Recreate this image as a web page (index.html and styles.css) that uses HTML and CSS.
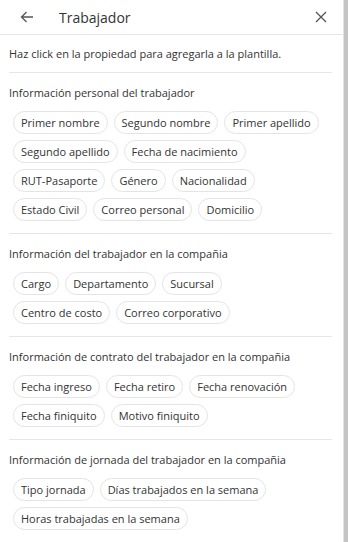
FILE: index.html
```html
<!DOCTYPE html>
<html lang="es">
<head>
    <meta charset="UTF-8">
    <meta name="viewport" content="width=device-width, initial-scale=1.0">
    <title>Trabajador</title>
    <link rel="stylesheet" href="styles.css">
</head>
<body>
<div class="frame">
    <div class="panel">
        <div class="header">
            <button class="icon-btn back" aria-label="Volver">
                <svg width="14" height="12" viewBox="0 0 14 12"><path d="M13 6H1.5M6.5 1L1.5 6l5 5" fill="none" stroke="#555" stroke-width="1.3"/></svg>
            </button>
            <span class="title">Trabajador</span>
            <button class="icon-btn close" aria-label="Cerrar">
                <svg width="12" height="12" viewBox="0 0 12 12"><path d="M1 1l10 10M11 1L1 11" fill="none" stroke="#555" stroke-width="1.3"/></svg>
            </button>
        </div>

        <div class="content">
            <p class="intro">Haz click en la propiedad para agregarla a la plantilla.</p>

            <div class="section">
                <h3>Información personal del trabajador</h3>
                <div class="chips">
                    <span class="chip">Primer nombre</span>
                    <span class="chip">Segundo nombre</span>
                    <span class="chip">Primer apellido</span>
                    <span class="chip">Segundo apellido</span>
                    <span class="chip">Fecha de nacimiento</span>
                    <span class="chip">RUT-Pasaporte</span>
                    <span class="chip">Género</span>
                    <span class="chip">Nacionalidad</span>
                    <span class="chip">Estado Civil</span>
                    <span class="chip">Correo personal</span>
                    <span class="chip">Domicilio</span>
                </div>
            </div>

            <div class="section">
                <h3>Información del trabajador en la compañia</h3>
                <div class="chips">
                    <span class="chip">Cargo</span>
                    <span class="chip">Departamento</span>
                    <span class="chip">Sucursal</span>
                    <span class="chip">Centro de costo</span>
                    <span class="chip">Correo corporativo</span>
                </div>
            </div>

            <div class="section">
                <h3>Información de contrato del trabajador en la compañia</h3>
                <div class="chips">
                    <span class="chip">Fecha ingreso</span>
                    <span class="chip">Fecha retiro</span>
                    <span class="chip">Fecha renovación</span>
                    <span class="chip">Fecha finiquito</span>
                    <span class="chip">Motivo finiquito</span>
                </div>
            </div>

            <div class="section">
                <h3>Información de jornada del trabajador en la compañia</h3>
                <div class="chips">
                    <span class="chip">Tipo jornada</span>
                    <span class="chip">Días trabajados en la semana</span>
                    <span class="chip">Horas trabajadas en la semana</span>
                </div>
            </div>
        </div>
    </div>
    <div class="scrollbar"></div>
</div>
</body>
</html>
```

FILE: styles.css
```css
body {
    margin: 0;
    font-family: 'Open Sans', 'Liberation Sans', sans-serif;
    color: #333;
    background-color: #fff;
}

.frame {
    display: flex;
    height: 542px;
    overflow: hidden;
}

.panel {
    flex: 1;
}

.scrollbar {
    width: 4px;
    background-color: #c4c4c4;
    border-left: 1px solid #e2e2e2;
}

.header {
    display: flex;
    align-items: center;
    height: 34px;
    padding: 0 14px 0 18px;
    border-bottom: 1px solid #e6e6e6;
}

.icon-btn {
    display: flex;
    align-items: center;
    background: none;
    border: none;
    padding: 2px;
    cursor: pointer;
}

.title {
    flex: 1;
    margin-left: 23px;
    font-size: 14px;
    color: #333;
}

.content {
    padding: 0 11px 0 9px;
}

.intro {
    margin: 0;
    padding: 11px 0 11px;
    font-size: 11px;
    line-height: 15px;
    color: #333;
}

.section {
    border-top: 1px solid #e6e6e6;
    padding: 12px 0 12px;
}

.section h3 {
    margin: 0 0 10px;
    font-size: 11px;
    line-height: 16px;
    font-weight: normal;
    color: #333;
}

.chips {
    display: flex;
    flex-wrap: wrap;
    gap: 6px;
    padding: 0 10px 0 4px;
}

.chip {
    display: inline-block;
    height: 23px;
    line-height: 21px;
    padding: 0 7px;
    border: 1px solid #e4e4e4;
    border-radius: 12px;
    font-size: 11px;
    color: #333;
    box-sizing: border-box;
    cursor: pointer;
}
```
